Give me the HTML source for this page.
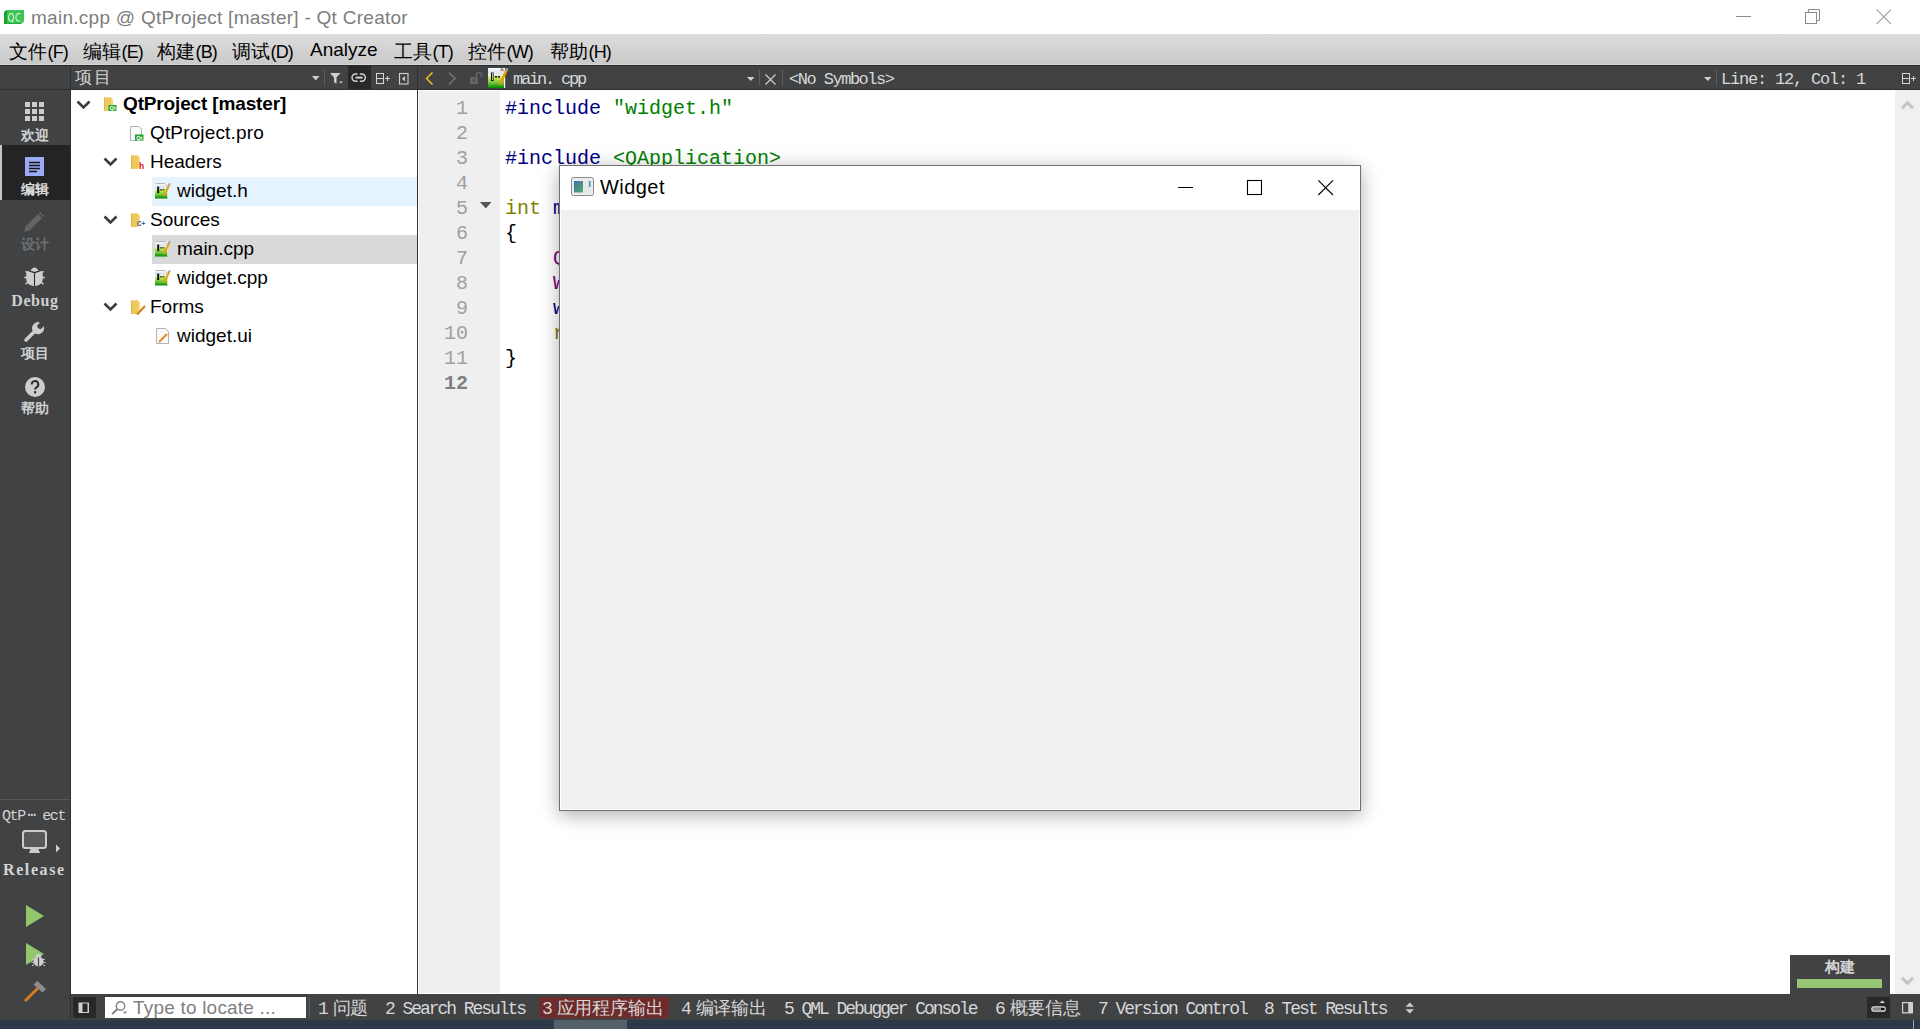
<!DOCTYPE html>
<html><head><meta charset="utf-8">
<style>
*{margin:0;padding:0;box-sizing:border-box}
html,body{width:1920px;height:1029px;overflow:hidden;background:#fff;font-family:"Liberation Sans",sans-serif}
.a{position:absolute}
svg{position:absolute;overflow:visible}
.mi{position:absolute;top:5px;font-size:19px;color:#000;white-space:nowrap}
.cj{font-size:19px;letter-spacing:0.3px}
.tr{position:absolute;font-size:19px;color:#000;white-space:nowrap}
.code{position:absolute;left:505px;font-family:'Liberation Mono',monospace;font-size:20px;white-space:pre;color:#000}
.ln{position:absolute;left:418px;width:50px;text-align:right;font-family:'Liberation Mono',monospace;font-size:20px;color:#a0a0a0}
.mode{position:absolute;left:0;width:70px;text-align:center;font-size:14px;font-weight:bold;color:#d0d0d0;white-space:nowrap}
.bt{position:absolute;top:999px;font-family:'Liberation Mono',monospace;font-size:18px;letter-spacing:-2.05px;line-height:20px;color:#d6d6d6;white-space:pre}
.bt b{font-weight:normal;letter-spacing:0;font-family:"Liberation Sans",sans-serif;font-size:17.5px;line-height:0;margin-left:-3px;letter-spacing:-0.2px}
.tbt{position:absolute;top:70px;font-family:'Liberation Mono',monospace;font-size:17px;color:#d8d8d8;white-space:pre}
</style></head><body>

<div class="a" style="left:0;top:0;width:1920px;height:34px;background:#fff"></div>
<svg style="left:4px;top:10px" width="20" height="14"><path d="M2.5 0H20V11L17 14H0V2.5z" fill="#25aa3a"/><path d="M2.5 0H20V11L18 13H3V2.5z" fill="#3cc554"/><path d="M0 2.5L2.5 0V14H0z" fill="#1e9e32"/><ellipse cx="7" cy="7.3" rx="2.5" ry="3.7" fill="none" stroke="#d6f3d6" stroke-width="1.1"/><path d="M7.6 10.6L9.3 12.2" stroke="#d6f3d6" stroke-width="1.2"/><path d="M16.3 3.6H14.4A2.5 3.7 0 0 0 14.4 11H16.3" fill="none" stroke="#d6f3d6" stroke-width="1.1"/></svg>
<div class="a" style="left:31px;top:7px;font-size:19px;letter-spacing:0.27px;color:#7d7d7d;white-space:nowrap">main.cpp @ QtProject [master] - Qt Creator</div>
<svg style="left:1736px;top:15px" width="16" height="3"><path d="M0 1.5h15" stroke="#8a8a8a" stroke-width="1"/></svg>
<svg style="left:1805px;top:9px" width="16" height="16"><path d="M3.5 3V0.5H14.5V11.5H12" fill="none" stroke="#8a8a8a" stroke-width="1"/><rect x="0.5" y="3.5" width="11" height="11" fill="none" stroke="#8a8a8a" stroke-width="1"/></svg>
<svg style="left:1876px;top:9px" width="16" height="16"><path d="M0.5 0.5l14.5 14.5M15 0.5L0.5 15" stroke="#8a8a8a" stroke-width="1.05"/></svg>

<div class="a" style="left:0;top:34px;width:1920px;height:31px;background:linear-gradient(#dddddd,#c9c9c9 96%,#d6d6d6 96%)"></div>
<div class="a" style="left:0;top:34px;width:1920px;height:31px">
<div class="mi" style="left:9px"><span class="cj">文件</span><span style="font-size:18px;letter-spacing:-0.9px">(F)</span></div>
<div class="mi" style="left:83px"><span class="cj">编辑</span><span style="font-size:18px;letter-spacing:-0.9px">(E)</span></div>
<div class="mi" style="left:157px"><span class="cj">构建</span><span style="font-size:18px;letter-spacing:-0.9px">(B)</span></div>
<div class="mi" style="left:232px"><span class="cj">调试</span><span style="font-size:18px;letter-spacing:-0.9px">(D)</span></div>
<div class="mi" style="left:310px">Analyze</div>
<div class="mi" style="left:394px"><span class="cj">工具</span><span style="font-size:18px;letter-spacing:-0.9px">(T)</span></div>
<div class="mi" style="left:468px"><span class="cj">控件</span><span style="font-size:18px;letter-spacing:-0.9px">(W)</span></div>
<div class="mi" style="left:550px"><span class="cj">帮助</span><span style="font-size:18px;letter-spacing:-0.9px">(H)</span></div>
</div>
<div class="a" style="left:0;top:65px;width:1920px;height:25px;background:#404244;border-top:1px solid #2b2c2d;border-bottom:1px solid #2e2f30"></div>
<div class="a" style="left:70px;top:65px;width:1px;height:25px;background:#2e2f30"></div>
<div class="a" style="left:75px;top:66px;font-size:17px;letter-spacing:1.5px;color:#d2d2d2">项目</div>
<svg style="left:312px;top:76px" width="8" height="5"><path d="M0 0h7.5L3.75 4.5z" fill="#d0d0d0"/></svg>
<div class="a" style="left:324px;top:70px;width:1px;height:16px;background:#5c5e60"></div>
<svg style="left:330px;top:73px" width="14" height="11"><path d="M0 0h10.5L6.5 4.5V11L4 9V4.5z" fill="#d0d0d0"/><path d="M9 8.5h4l-2 2z" fill="#d0d0d0"/></svg>
<div class="a" style="left:348px;top:66px;width:23px;height:23px;background:#262829"></div>
<svg style="left:351px;top:73px" width="16" height="10"><path d="M6.5 1H4.6a3.6 3.6 0 0 0 0 7.2H6.5M8.8 1h1.9a3.6 3.6 0 0 1 0 7.2H8.8" fill="none" stroke="#d4d4d4" stroke-width="1.5"/><path d="M4.5 4.6h7" stroke="#d4d4d4" stroke-width="2"/></svg>
<svg style="left:376px;top:73px" width="15" height="12"><rect x="0.5" y="0.5" width="7" height="10" fill="none" stroke="#d4d4d4" stroke-width="1"/><path d="M0.5 5.5h7M9 5.5h5M11.5 3v5" stroke="#d4d4d4" stroke-width="1"/></svg>
<svg style="left:399px;top:73px" width="10" height="12"><rect x="0.5" y="0.5" width="8.5" height="10.5" fill="none" stroke="#d0d0d0" stroke-width="1.1"/><path d="M6 3v5.5L3 5.75z" fill="#d0d0d0"/></svg>
<div class="a" style="left:417px;top:65px;width:1px;height:25px;background:#2e2f30"></div>
<svg style="left:425px;top:72px" width="9" height="13"><path d="M7.5 0.5L1.5 6.5l6 6" fill="none" stroke="#f0c020" stroke-width="1.5"/></svg>
<svg style="left:448px;top:72px" width="9" height="13"><path d="M1 0.5l6 6-6 6" fill="none" stroke="#737577" stroke-width="1.5"/></svg>
<svg style="left:470px;top:72px" width="13" height="12"><rect x="0" y="5" width="8" height="7" fill="#616365"/><path d="M6.5 5V3a2.5 2.5 0 0 1 5 0v2" fill="none" stroke="#616365" stroke-width="1.5"/><rect x="3" y="7.5" width="2" height="2" fill="#404244"/></svg>
<svg style="left:488px;top:68px" width="21" height="21"><defs><linearGradient id="gg" x1="0" y1="0" x2="0" y2="1"><stop offset="0" stop-color="#ffffff"/><stop offset="0.2" stop-color="#dde5ea"/><stop offset="0.38" stop-color="#e6f0dc"/><stop offset="0.45" stop-color="#d6f25a"/><stop offset="0.75" stop-color="#6cc23c"/><stop offset="1" stop-color="#008a00"/></linearGradient></defs><rect x="0" y="0" width="17" height="20" fill="url(#gg)"/><rect x="16" y="9" width="1.2" height="11" fill="#f4f4f4"/><path d="M12.5 0h2l2 3h-4z" fill="#9a9a9a"/><rect x="3" y="4.5" width="2.6" height="8.5" fill="#111"/><rect x="4" y="5" width="0.8" height="7" fill="#ddd"/><rect x="6.8" y="8" width="2.2" height="1.6" fill="#222"/><rect x="9.8" y="8" width="2.2" height="1.6" fill="#222"/><path d="M11.8 16.5L18.6 2" stroke="#e6a00c" stroke-width="2.6"/><path d="M18.3 2.4L19.4 0.2" stroke="#9aa0a8" stroke-width="2.4"/></svg>

<div class="tbt" style="left:513px;letter-spacing:-2.2px">main. cpp</div>
<svg style="left:747px;top:77px" width="8" height="5"><path d="M0 0h7.5L3.75 4z" fill="#d0d0d0"/></svg>
<div class="a" style="left:759px;top:70px;width:1px;height:16px;background:#5c5e60"></div>
<svg style="left:765px;top:74px" width="11" height="11"><path d="M0.5 0.5l10 10M10.5 0.5l-10 10" stroke="#d0d0d0" stroke-width="1.2"/></svg>
<div class="a" style="left:782px;top:70px;width:1px;height:16px;background:#5c5e60"></div>

<div class="tbt" style="left:789px;letter-spacing:-1.5px">&lt;No Symbols&gt;</div>
<svg style="left:1704px;top:77px" width="8" height="5"><path d="M0 0h7.5L3.75 4z" fill="#d0d0d0"/></svg>
<div class="a" style="left:1716px;top:70px;width:1px;height:16px;background:#5c5e60"></div>

<div class="tbt" style="left:1721px;letter-spacing:-1.2px">Line: 12, Col: 1</div>
<svg style="left:1902px;top:73px" width="15" height="12"><rect x="0.5" y="0.5" width="7" height="10" fill="none" stroke="#d4d4d4" stroke-width="1"/><path d="M0.5 5.5h7M9 5.5h5M11.5 3v5" stroke="#d4d4d4" stroke-width="1"/></svg>

<div class="a" style="left:0;top:90px;width:70px;height:930px;background:#404244"></div>
<div class="a" style="left:70px;top:90px;width:1px;height:930px;background:#2e2f30"></div>
<svg style="left:25px;top:102px" width="20" height="20"><g fill="#cdcdcd"><rect x="0" y="0" width="5" height="5"/><rect x="7" y="0" width="5" height="5"/><rect x="14" y="0" width="5" height="5"/><rect x="0" y="7" width="5" height="5"/><rect x="7" y="7" width="5" height="5"/><rect x="14" y="7" width="5" height="5"/><rect x="0" y="14" width="5" height="5"/><rect x="7" y="14" width="5" height="5"/><rect x="14" y="14" width="5" height="5"/></g></svg>
<div class="mode" style="top:127px">欢迎</div>
<div class="a" style="left:0;top:145px;width:70px;height:55px;background:#232425"></div>
<div class="a" style="left:0;top:145px;width:2px;height:55px;background:#c4c4c4"></div>
<svg style="left:25px;top:157px" width="20" height="20"><rect width="19" height="19" fill="#9ca9f4"/><path d="M4 5.5h11M4 8.5h11M4 11.5h11M4 14.5h8" stroke="#151515" stroke-width="1.3"/></svg>
<div class="mode" style="top:181px;color:#dcdcdc">编辑</div>
<svg style="left:24px;top:212px" width="21" height="21"><path d="M0 20l1.5-5.5L14 2l4 4L5.5 18.5z" fill="#626466"/><path d="M15 1l1-1 4 4-1 1z" fill="#626466"/></svg>
<div class="mode" style="top:236px;color:#6c6e70">设计</div>
<svg style="left:24px;top:266px" width="21" height="21"><path d="M1.5 5.3L4.2 7.6M19.5 5.3L16.8 7.6M0.2 11.5H3.2M20.8 11.5H17.8M1.6 18.2L4.2 15.8M19.4 18.2L16.8 15.8" stroke="#cdcdcd" stroke-width="1.5"/><path d="M3.2 5 L10.5 6.8 L17.8 5 C19.4 9 19.4 15 17 17.6 C15 19.6 12 20.3 10.5 20.3 C9 20.3 6 19.6 4 17.6 C1.6 15 1.6 9 3.2 5 Z" fill="#cdcdcd"/><path d="M6.6 5 C7.8 0.3 13.2 0.3 14.4 5 L10.5 6.2 Z" fill="#cdcdcd"/><path d="M6 5.2L10.5 6.6 15 5.2M10.5 6.6V20.5" fill="none" stroke="#2a2b2c" stroke-width="1.1"/></svg>
<div class="mode" style="top:292px;font-family:'Liberation Serif',serif;font-size:16px;letter-spacing:0.6px">Debug</div>
<svg style="left:24px;top:322px" width="21" height="21"><path d="M2 18L11.5 8.5" stroke="#cdcdcd" stroke-width="3.6" stroke-linecap="round"/><path d="M9.5 10a6 6 0 0 1 6.5-9.5l-3 3.2 1 2.6 2.6 1 3.2-3a6 6 0 0 1-9.5 6.5z" fill="#cdcdcd"/></svg>
<div class="mode" style="top:345px">项目</div>
<svg style="left:25px;top:377px" width="20" height="20"><circle cx="10" cy="10" r="10" fill="#cdcdcd"/><path d="M6.7 7.5a3.3 3.3 0 1 1 4.8 2.8c-1 .6-1.4 1.1-1.4 2.3" fill="none" stroke="#2a2b2c" stroke-width="2"/><rect x="9" y="14.2" width="2.2" height="2.2" fill="#2a2b2c"/></svg>
<div class="mode" style="top:400px">帮助</div>
<div class="a" style="left:0;top:799px;width:70px;height:1px;background:#56585a"></div>

<div class="a" style="left:2px;top:807px;font-family:'Liberation Mono',monospace;font-size:15px;letter-spacing:-1.4px;color:#d4d4d4;white-space:pre">QtP<span style="letter-spacing:0;font-size:14px;position:relative;top:-1px;margin:0 6px 0 3px">⋯</span>ect</div>
<svg style="left:22px;top:830px" width="40" height="24"><rect x="1" y="1" width="23" height="17" rx="2.5" fill="#57595b" stroke="#cdcdcd" stroke-width="2"/><path d="M9 18h7l2 5H7z" fill="#cdcdcd"/><path d="M34 14.5v8l4-4z" fill="#cdcdcd"/></svg>

<div class="a" style="left:3px;top:861px;font-family:'Liberation Serif',serif;font-size:16px;font-weight:bold;letter-spacing:1.6px;color:#d4d4d4;white-space:pre">Release</div>
<svg style="left:26px;top:905px" width="18" height="22"><path d="M0 0l18 11L0 22z" fill="#93c66c"/></svg>
<svg style="left:26px;top:943px" width="20" height="24"><path d="M0 0l18 11L0 22z" fill="#93c66c"/><path d="M6 16l2 .8M19 16l-2 .8M5.5 19.5h2M19.5 19.5h-2M6 23l2-1.5M19 23l-2-1.5" stroke="#d0d0d0" stroke-width="1"/><ellipse cx="12.5" cy="18.5" rx="5" ry="5" fill="#d0d0d0"/><ellipse cx="12.5" cy="13" rx="2.8" ry="2" fill="#d0d0d0"/><path d="M12.5 14.5v9" stroke="#404244" stroke-width="1.2"/></svg>
<svg style="left:23px;top:980px" width="24" height="23"><path d="M2 21L15 8" stroke="#d47d1c" stroke-width="3"/><path d="M10.5 4.5l4-3.5 8.5 8-3.5 3.5z" fill="#8e8e8e"/></svg>

<div class="a" style="left:71px;top:90px;width:346px;height:904px;background:#fff"></div>
<div class="a" style="left:152px;top:177px;width:265px;height:29px;background:#e5f3ff"></div>
<div class="a" style="left:152px;top:235px;width:265px;height:29px;background:#d9d9d9"></div>

<svg style="left:76px;top:100px" width="15" height="10"><path d="M1.5 1.5L7.5 7.5l6-6" fill="none" stroke="#3c3c3c" stroke-width="2.6"/></svg>
<svg style="left:104px;top:97px" width="16" height="16"><path d="M0.5 0.5h6.5l2 2V13L3 13.8 0.5 14z" fill="#f5d77a"/><path d="M0.5 0.5h6.5v13.5L0.5 14z" fill="#ecc95a"/><path d="M0.5 0.5v13.5" stroke="#e0b84a" stroke-width="1"/><rect x="4.5" y="8" width="8" height="6" fill="#1fa52e"/><text x="8.5" y="13.2" text-anchor="middle" font-size="5.5" font-family="Liberation Sans" font-weight="bold" fill="#fff">Qt</text></svg>
<div class="tr" style="left:123px;top:93px;font-weight:bold;letter-spacing:-0.15px">QtProject [master]</div>
<svg style="left:130px;top:126px" width="14" height="15"><path d="M0.5 0.5h8.5l2.5 2.5v11.5H0.5z" fill="#fafafa" stroke="#b0b0b0"/><rect x="5" y="8.5" width="8.5" height="6" fill="#1fa52e"/><text x="9.25" y="13.7" text-anchor="middle" font-size="5.5" font-family="Liberation Sans" font-weight="bold" fill="#fff">Qt</text></svg>
<div class="tr" style="left:150px;top:122px;letter-spacing:0.15px">QtProject.pro</div>
<svg style="left:103px;top:157px" width="15" height="10"><path d="M1.5 1.5L7.5 7.5l6-6" fill="none" stroke="#3c3c3c" stroke-width="2.6"/></svg>
<svg style="left:131px;top:155px" width="16" height="16"><path d="M0.5 0.5h6.5l2 2V13L3 13.8 0.5 14z" fill="#f5d77a"/><path d="M0.5 0.5h6.5v13.5L0.5 14z" fill="#ecc95a"/><path d="M0.5 0.5v13.5" stroke="#e0b84a" stroke-width="1"/><text x="10.5" y="13.5" text-anchor="middle" font-size="8.5" font-family="Liberation Sans" font-weight="bold" fill="#e01818">h</text></svg>
<div class="tr" style="left:150px;top:151px">Headers</div>
<svg style="left:155px;top:183px" width="16" height="16"><defs><linearGradient id="g155183" x1="0" y1="0" x2="0" y2="1"><stop offset="0" stop-color="#ffffff"/><stop offset="0.2" stop-color="#dde5ea"/><stop offset="0.38" stop-color="#e6f0dc"/><stop offset="0.45" stop-color="#d6f25a"/><stop offset="0.75" stop-color="#6cc23c"/><stop offset="1" stop-color="#008a00"/></linearGradient></defs><rect x="0" y="0.5" width="13" height="15" fill="url(#g155183)"/><path d="M0.5 0.5h9.5l3 3" fill="none" stroke="#b8b8b8" stroke-width="1"/><rect x="12.2" y="7" width="1" height="8.5" fill="#f0f0f0"/><rect x="2.2" y="3.6" width="2" height="6.5" fill="#111"/><rect x="5.2" y="6.2" width="1.7" height="1.3" fill="#222"/><rect x="7.6" y="6.2" width="1.7" height="1.3" fill="#222"/><path d="M9 13L14.2 1.8" stroke="#e6a00c" stroke-width="2"/><path d="M14 2.2L14.9 0.3" stroke="#9aa0a8" stroke-width="1.8"/></svg>
<div class="tr" style="left:177px;top:180px">widget.h</div>
<svg style="left:103px;top:215px" width="15" height="10"><path d="M1.5 1.5L7.5 7.5l6-6" fill="none" stroke="#3c3c3c" stroke-width="2.6"/></svg>
<svg style="left:131px;top:213px" width="16" height="16"><path d="M0.5 0.5h6.5l2 2V13L3 13.8 0.5 14z" fill="#f5d77a"/><path d="M0.5 0.5h6.5v13.5L0.5 14z" fill="#ecc95a"/><path d="M0.5 0.5v13.5" stroke="#e0b84a" stroke-width="1"/><text x="10" y="13" text-anchor="middle" font-size="6.5" font-family="Liberation Sans" font-weight="bold" fill="#2b5c9c">C+</text></svg>
<div class="tr" style="left:150px;top:209px">Sources</div>
<svg style="left:155px;top:241px" width="16" height="16"><defs><linearGradient id="g155241" x1="0" y1="0" x2="0" y2="1"><stop offset="0" stop-color="#ffffff"/><stop offset="0.2" stop-color="#dde5ea"/><stop offset="0.38" stop-color="#e6f0dc"/><stop offset="0.45" stop-color="#d6f25a"/><stop offset="0.75" stop-color="#6cc23c"/><stop offset="1" stop-color="#008a00"/></linearGradient></defs><rect x="0" y="0.5" width="13" height="15" fill="url(#g155241)"/><path d="M0.5 0.5h9.5l3 3" fill="none" stroke="#b8b8b8" stroke-width="1"/><rect x="12.2" y="7" width="1" height="8.5" fill="#f0f0f0"/><rect x="2.2" y="3.6" width="2" height="6.5" fill="#111"/><rect x="5.2" y="6.2" width="1.7" height="1.3" fill="#222"/><rect x="7.6" y="6.2" width="1.7" height="1.3" fill="#222"/><path d="M9 13L14.2 1.8" stroke="#e6a00c" stroke-width="2"/><path d="M14 2.2L14.9 0.3" stroke="#9aa0a8" stroke-width="1.8"/></svg>
<div class="tr" style="left:177px;top:238px">main.cpp</div>
<svg style="left:155px;top:270px" width="16" height="16"><defs><linearGradient id="g155270" x1="0" y1="0" x2="0" y2="1"><stop offset="0" stop-color="#ffffff"/><stop offset="0.2" stop-color="#dde5ea"/><stop offset="0.38" stop-color="#e6f0dc"/><stop offset="0.45" stop-color="#d6f25a"/><stop offset="0.75" stop-color="#6cc23c"/><stop offset="1" stop-color="#008a00"/></linearGradient></defs><rect x="0" y="0.5" width="13" height="15" fill="url(#g155270)"/><path d="M0.5 0.5h9.5l3 3" fill="none" stroke="#b8b8b8" stroke-width="1"/><rect x="12.2" y="7" width="1" height="8.5" fill="#f0f0f0"/><rect x="2.2" y="3.6" width="2" height="6.5" fill="#111"/><rect x="5.2" y="6.2" width="1.7" height="1.3" fill="#222"/><rect x="7.6" y="6.2" width="1.7" height="1.3" fill="#222"/><path d="M9 13L14.2 1.8" stroke="#e6a00c" stroke-width="2"/><path d="M14 2.2L14.9 0.3" stroke="#9aa0a8" stroke-width="1.8"/></svg>
<div class="tr" style="left:177px;top:267px">widget.cpp</div>
<svg style="left:103px;top:302px" width="15" height="10"><path d="M1.5 1.5L7.5 7.5l6-6" fill="none" stroke="#3c3c3c" stroke-width="2.6"/></svg>
<svg style="left:131px;top:300px" width="16" height="16"><path d="M0.5 0.5h6.5l2 2V13L3 13.8 0.5 14z" fill="#f5d77a"/><path d="M0.5 0.5h6.5v13.5L0.5 14z" fill="#ecc95a"/><path d="M0.5 0.5v13.5" stroke="#e0b84a" stroke-width="1"/><path d="M6 14.5L14 6" stroke="#d5801a" stroke-width="2.2"/></svg>
<div class="tr" style="left:150px;top:296px">Forms</div>
<svg style="left:156px;top:328px" width="14" height="16"><path d="M0.5 0.5h9l3 3v12H0.5z" fill="#fafafa" stroke="#b0b0b0"/><path d="M3 14l8-8" stroke="#e08a20" stroke-width="2"/></svg>
<div class="tr" style="left:177px;top:325px">widget.ui</div>
<div class="a" style="left:417px;top:90px;width:1px;height:904px;background:#333435"></div>
<div class="a" style="left:418px;top:90px;width:82px;height:904px;background:#efefef;border-left:1px solid #fff;border-top:1px solid #fff;border-bottom:1px solid #fff"></div>
<div class="a" style="left:500px;top:90px;width:1395px;height:904px;background:#fff"></div>

<div class="ln" style="top:97px;">1</div>
<div class="ln" style="top:122px;">2</div>
<div class="ln" style="top:147px;">3</div>
<div class="ln" style="top:172px;">4</div>
<div class="ln" style="top:197px;">5</div>
<div class="ln" style="top:222px;">6</div>
<div class="ln" style="top:247px;">7</div>
<div class="ln" style="top:272px;">8</div>
<div class="ln" style="top:297px;">9</div>
<div class="ln" style="top:322px;">10</div>
<div class="ln" style="top:347px;">11</div>
<div class="ln" style="top:372px;font-weight:bold;color:#808080">12</div>
<svg style="left:480px;top:202px" width="12" height="7"><path d="M0 0h11.5L5.75 6.5z" fill="#555"/></svg>
<div class="code" style="top:97px"><span style="color:#000080">#include</span> <span style="color:#008000">"widget.h"</span></div>
<div class="code" style="top:147px"><span style="color:#000080">#include</span> <span style="color:#008000">&lt;QApplication&gt;</span></div>
<div class="code" style="top:197px"><span style="color:#808000">int</span> <span style="color:#00008b">m</span></div>
<div class="code" style="top:222px">{</div>
<div class="code" style="top:247px">    <span style="color:#800080">Q</span></div>
<div class="code" style="top:272px">    <span style="color:#800080">W</span></div>
<div class="code" style="top:297px">    <span style="color:#000080">w</span></div>
<div class="code" style="top:322px">    <span style="color:#808000">r</span></div>
<div class="code" style="top:347px">}</div>
<div class="a" style="left:1895px;top:90px;width:25px;height:904px;background:#f0f0f0"></div>
<svg style="left:1901px;top:100px" width="13" height="9"><path d="M1 8.2L6.5 2.7 12 8.2" fill="none" stroke="#c4c4c4" stroke-width="3"/></svg>
<svg style="left:1901px;top:977px" width="13" height="9"><path d="M1 0.8l5.5 5.5L12 0.8" fill="none" stroke="#c4c4c4" stroke-width="3"/></svg>
<div class="a" style="left:1790px;top:955px;width:100px;height:39px;background:#404244"></div>
<div class="a" style="left:1790px;top:958px;width:100px;text-align:center;font-size:15px;font-weight:bold;color:#d4d4d4">构建</div>
<div class="a" style="left:1797px;top:979px;width:85px;height:9px;background:#98c573"></div>

<div class="a" style="left:71px;top:994px;width:1849px;height:26px;background:#404244"></div>
<div class="a" style="left:73px;top:997px;width:23px;height:21px;background:#262829"></div>
<svg style="left:78px;top:1002px" width="11" height="11"><rect x="0.5" y="0.5" width="10.5" height="10.5" fill="#d0d0d0"/><rect x="4.5" y="1.5" width="5" height="8.5" fill="#262829"/></svg>
<div class="a" style="left:105px;top:997px;width:201px;height:21px;background:#fff"></div>
<svg style="left:111px;top:1001px" width="16" height="14"><circle cx="9.5" cy="5" r="4.2" fill="none" stroke="#808080" stroke-width="1.4"/><path d="M6.5 8L1 13.2" stroke="#808080" stroke-width="1.8"/><path d="M12 10.5h4l-2 2.5z" fill="#808080"/></svg>
<div class="a" style="left:133px;top:997px;font-size:19px;letter-spacing:0.2px;color:#808080;white-space:nowrap">Type to locate ...</div>
<div class="a" style="left:309px;top:997px;width:1px;height:21px;background:#5c5e60"></div>
<div class="a" style="left:539px;top:997px;width:130px;height:21px;background:#6e2b2b"></div>

<div class="bt" style="left:318px">1 <b>问题</b></div>
<div class="bt" style="left:385px">2 Search Results</div>
<div class="bt" style="left:542px">3 <b>应用程序输出</b></div>
<div class="bt" style="left:681px">4 <b>编译输出</b></div>
<div class="bt" style="left:784px">5 QML Debugger Console</div>
<div class="bt" style="left:995px">6 <b>概要信息</b></div>
<div class="bt" style="left:1098px">7 Version Control</div>
<div class="bt" style="left:1264px">8 Test Results</div>
<svg style="left:1405px;top:1002px" width="10" height="12"><path d="M0.5 4.8L4.75 0.5 9 4.8zM0.5 7.2L4.75 11.5 9 7.2z" fill="#d0d0d0"/></svg>
<div class="a" style="left:1867px;top:997px;width:23px;height:21px;background:#262829"></div>
<svg style="left:1871px;top:1000px" width="15" height="12"><path d="M8.5 3l2.75-2.5L14 3z" fill="#d8d8d8"/><rect x="0.75" y="6.75" width="13.5" height="4.5" rx="2.25" fill="#8a8a8a" stroke="#e0e0e0" stroke-width="1.2"/><rect x="10" y="8" width="3.5" height="2" fill="#111"/></svg>
<svg style="left:1902px;top:1002px" width="12" height="12"><rect x="0" y="0" width="11" height="11.5" fill="#d0d0d0"/><rect x="1.2" y="1.2" width="5" height="9" fill="#404244"/></svg>
<div class="a" style="left:0;top:1020px;width:1920px;height:9px;background:#2d3948"></div>
<div class="a" style="left:554px;top:1020px;width:73px;height:9px;background:#56606b"></div>
<div class="a" style="left:1913px;top:1020px;width:1px;height:9px;background:#9aa0a8"></div>

<div class="a" style="left:559px;top:165px;width:802px;height:646px;box-shadow:0 4px 18px 0px rgba(0,0,0,0.32);background:#f0f0f0;border:1px solid #707070">
 <div class="a" style="left:0;top:0;width:800px;height:44px;background:#fff"></div>
 <div class="a" style="left:0;top:44px;width:800px;height:600px;border:1px solid #fff;border-top:0"></div>
 <svg style="left:11px;top:11px" width="24" height="20"><rect x="0.5" y="0.5" width="22" height="18" rx="2" fill="#ececec" stroke="#8a8a8a"/><defs><linearGradient id="wg" x1="0" y1="0" x2="1" y2="1"><stop offset="0" stop-color="#3d6fa3"/><stop offset="1" stop-color="#5aae6a"/></linearGradient></defs><rect x="3" y="4" width="9" height="11.5" fill="url(#wg)"/><rect x="13" y="4" width="7" height="11.5" fill="#e4e8e8"/><rect x="18" y="4" width="1.5" height="6" fill="#4a90b0"/></svg>
 <div class="a" style="left:40px;top:10px;font-size:20px;letter-spacing:0.45px;color:#000">Widget</div>
 <svg style="left:618px;top:21px" width="16" height="2"><path d="M0 0.5h15" stroke="#000" stroke-width="1"/></svg>
 <svg style="left:687px;top:14px" width="16" height="16"><rect x="0.5" y="0.5" width="14" height="14" fill="none" stroke="#000" stroke-width="1.1"/></svg>
 <svg style="left:758px;top:14px" width="16" height="16"><path d="M0.3 0.3l14.7 14.7M15 0.3L0.3 15" stroke="#000" stroke-width="1.1"/></svg>
</div>

</body></html>
